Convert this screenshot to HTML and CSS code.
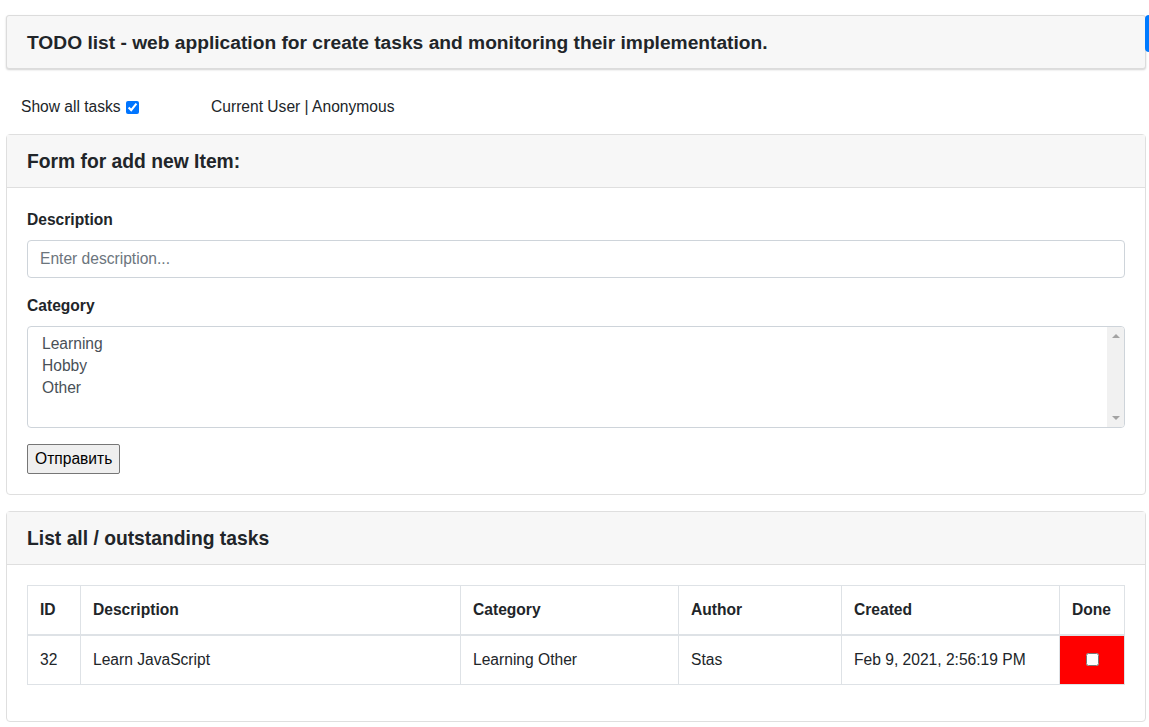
FILE: index.html
```html
<!DOCTYPE html>
<html lang="en">
<head>
<meta charset="utf-8">
<title>TODO list</title>
<link rel="stylesheet" href="styles.css">
</head>
<body>
<div class="page">
  <header class="top-card">
    <h4 class="top-title">TODO list - web application for create tasks and monitoring their implementation.</h4>
    <span class="edge-btn"></span>
  </header>

  <div class="status-row">
    <label class="show-all">Show all tasks <input class="check" type="checkbox" checked></label>
    <span class="user">Current User | Anonymous</span>
  </div>

  <section class="card">
    <div class="card-header"><h5 class="card-title">Form for add new Item:</h5></div>
    <div class="card-body">
      <form class="form">
        <div class="form-group">
          <label class="field-label">Description</label>
          <input class="form-control" type="text" placeholder="Enter description...">
        </div>
        <div class="form-group">
          <label class="field-label">Category</label>
          <div class="listbox">
            <ul class="options">
              <li>Learning</li>
              <li>Hobby</li>
              <li>Other</li>
            </ul>
            <div class="scrollbar">
              <span class="arrow arrow-up"></span>
              <span class="arrow arrow-down"></span>
            </div>
          </div>
        </div>
        <button class="submit" type="button">Отправить</button>
      </form>
    </div>
  </section>

  <section class="card">
    <div class="card-header"><h5 class="card-title">List all / outstanding tasks</h5></div>
    <div class="card-body">
      <table class="table">
        <thead>
          <tr>
            <th class="c-id">ID</th>
            <th class="c-desc">Description</th>
            <th class="c-cat">Category</th>
            <th class="c-author">Author</th>
            <th class="c-created">Created</th>
            <th class="c-done">Done</th>
          </tr>
        </thead>
        <tbody>
          <tr>
            <td>32</td>
            <td>Learn JavaScript</td>
            <td>Learning Other</td>
            <td>Stas</td>
            <td>Feb 9, 2021, 2:56:19 PM</td>
            <td class="done-cell"><input class="done-check" type="checkbox"></td>
          </tr>
        </tbody>
      </table>
    </div>
  </section>
</div>
</body>
</html>
```

FILE: styles.css
```css
html {
  overflow: hidden;
}

body {
  margin: 0;
  background: #ffffff;
  color: #212529;
  font-family: "Liberation Sans", Arial, sans-serif;
  font-size: 15.6px;
  line-height: 24px;
}

.page {
  width: 1140px;
  margin-left: 6px;
  padding-top: 15px;
}

.top-card {
  display: flex;
  align-items: flex-start;
  background: #f7f7f7;
  border: 1px solid #dcdcdc;
  border-radius: 3px;
  box-shadow: 0 1px 2px rgba(0, 0, 0, 0.18);
  padding: 13px 20px 11px;
}

.top-title {
  margin: 0;
  font-size: 19.2px;
  font-weight: 700;
  line-height: 28px;
  white-space: nowrap;
}

.edge-btn {
  flex: none;
  width: 60px;
  height: 37px;
  margin: -14px -80px 0 auto;
  background: #007bff;
  border-radius: 4px;
}

.status-row {
  display: flex;
  padding: 26px 0 15px 15px;
}

.show-all {
  width: 190px;
  display: flex;
  align-items: center;
  gap: 5px;
}

.check {
  margin: 0;
  width: 13px;
  height: 13px;
}

.card {
  border: 1px solid #dfdfdf;
  border-radius: 4px;
  margin-bottom: 16px;
  background: #fff;
}

.card-header {
  background: #f7f7f7;
  border-bottom: 1px solid #dfdfdf;
  padding: 14px 20px 12px;
}

.card-title {
  margin: 0;
  font-size: 19.3px;
  font-weight: 700;
  line-height: 26px;
}

.card-body {
  padding: 20px;
}

.form-group {
  margin-bottom: 16px;
}

.field-label {
  display: block;
  font-weight: 700;
  margin-bottom: 8px;
}

.form-control {
  display: block;
  box-sizing: border-box;
  width: 100%;
  height: 38px;
  margin: 0;
  padding: 6px 12px;
  border: 1px solid #ced4da;
  border-radius: 4px;
  font: inherit;
  color: #495057;
}

.form-control::placeholder {
  color: #6c757d;
}

.listbox {
  display: flex;
  height: 102px;
  box-sizing: border-box;
  border: 1px solid #ced4da;
  border-radius: 4px;
  overflow: hidden;
}

.options {
  flex: 1;
  list-style: none;
  margin: 0;
  padding: 6px 14px;
  color: #495057;
  line-height: 22px;
}

.scrollbar {
  width: 17px;
  background: #f1f1f1;
  display: flex;
  flex-direction: column;
  justify-content: space-between;
  align-items: center;
  padding: 7px 0;
}

.arrow {
  width: 0;
  height: 0;
  border-left: 4px solid transparent;
  border-right: 4px solid transparent;
}

.arrow-up {
  border-bottom: 4px solid #a3a3a3;
}

.arrow-down {
  border-top: 4px solid #a3a3a3;
}

.submit {
  font: inherit;
  line-height: 24px;
  color: #000;
  background: #efefef;
  border: 1px solid #767676;
  border-radius: 2px;
  padding: 2px 7px;
  margin: 0;
}

.table {
  width: 100%;
  border-collapse: collapse;
  margin-bottom: 16px;
  table-layout: fixed;
}

.table th,
.table td {
  box-sizing: border-box;
  border: 1px solid #dee2e6;
  padding: 12px;
  text-align: left;
  vertical-align: top;
}

.table th {
  font-weight: 700;
  border-bottom-width: 2px;
}

.c-id { width: 53px; }
.c-desc { width: 380px; }
.c-cat { width: 218px; }
.c-author { width: 163px; }
.c-created { width: 218px; }
.c-done { width: 65px; }

.table .done-cell {
  background: #ff0000;
  text-align: center;
}

.done-check {
  margin: 5px 0 0;
  width: 13px;
  height: 13px;
  vertical-align: top;
}
```
